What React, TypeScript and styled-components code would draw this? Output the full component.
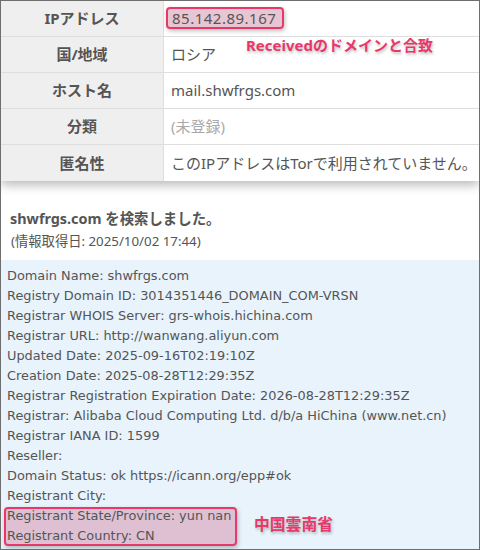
import styled, { createGlobalStyle } from 'styled-components';

const GlobalStyle = createGlobalStyle`
  body {
    margin: 0;
    background: #ffffff;
    font-family: 'Noto Sans', 'Noto Sans CJK JP', sans-serif;
  }
`;

const pink = '#e8386a';

const Frame = styled.div`
  position: relative;
  width: 480px;
  height: 550px;
  box-sizing: border-box;
  border: 1px solid #6e6e6e;
  overflow: hidden;
  background: #ffffff;
`;

const InfoTable = styled.div`
  display: grid;
  grid-template-columns: 163px 1fr;
  box-shadow: 0 4px 10px rgba(0, 0, 0, 0.28);
  position: relative;
  z-index: 1;
`;

const Label = styled.div<{ $last?: boolean }>`
  height: 36px;
  box-sizing: border-box;
  display: flex;
  align-items: center;
  justify-content: center;
  padding-bottom: 2px;
  background: #efefef;
  border-right: 1px solid #dedede;
  border-bottom: ${(p) => (p.$last ? 'none' : '1px solid #dedede')};
  font-weight: 700;
  font-size: 15px;
  color: #555555;
`;

const Value = styled.div<{ $last?: boolean; $muted?: boolean }>`
  position: relative;
  height: 36px;
  box-sizing: border-box;
  display: flex;
  align-items: center;
  padding: 0 0 2px 7px;
  background: #ffffff;
  border-bottom: ${(p) => (p.$last ? 'none' : '1px solid #dedede')};
  font-size: 15px;
  color: ${(p) => (p.$muted ? '#a9a9a9' : '#555555')};
  white-space: nowrap;
`;

const Marked = styled.span`
  display: inline-block;
  margin-left: -5px;
  padding: 0 6px 0 4px;
  line-height: 18px;
  letter-spacing: 0.5px;
  border: 2px solid ${pink};
  border-radius: 4px;
  background: rgba(214, 150, 175, 0.55);
  box-shadow: 1px 2px 4px rgba(0, 0, 0, 0.25);
`;

const Note = styled.span<{ $top: number; $left: number; $size?: number }>`
  position: absolute;
  top: ${(p) => p.$top}px;
  left: ${(p) => p.$left}px;
  color: ${pink};
  font-weight: 700;
  font-size: ${(p) => p.$size ?? 15}px;
  white-space: nowrap;
  text-shadow: 1px 2px 3px rgba(0, 0, 0, 0.25);
  z-index: 2;
`;

const Search = styled.div`
  padding: 27px 9px 8px;
  color: #555555;
`;

const SearchTitle = styled.div`
  font-size: 14.4px;
  font-weight: 700;
  line-height: 22px;
`;

const SearchDate = styled.div`
  font-size: 13.3px;
  line-height: 22px;
  padding-left: 1px;
`;

const Whois = styled.div`
  position: relative;
  background: #e8f3fc;
  padding: 6px 6px 0;
  height: 289px;
  box-sizing: border-box;
  font-family: 'DejaVu Sans', 'Noto Sans CJK JP', sans-serif;
  font-size: 12.9px;
  line-height: 20px;
  color: #555555;
`;

const Line = styled.div`
  white-space: nowrap;
`;

const MarkedBlock = styled.div`
  display: inline-block;
  box-sizing: border-box;
  height: 39px;
  margin: 1px 0 0 -3px;
  padding: 0 4px 0 1px;
  border: 2px solid ${pink};
  border-radius: 4px;
  background: rgba(214, 150, 175, 0.55);
  box-shadow: 1px 2px 4px rgba(0, 0, 0, 0.25);
`;

const MarkedLines = styled.div`
  margin-top: -3px;
`;

const rows = [
  { label: 'IPアドレス', value: '85.142.89.167', marked: true },
  { label: '国/地域', value: 'ロシア' },
  { label: 'ホスト名', value: 'mail.shwfrgs.com' },
  { label: '分類', value: '(未登録)', muted: true },
  { label: '匿名性', value: 'このIPアドレスはTorで利用されていません。' },
];

const whoisLines = [
  'Domain Name: shwfrgs.com',
  'Registry Domain ID: 3014351446_DOMAIN_COM-VRSN',
  'Registrar WHOIS Server: grs-whois.hichina.com',
  'Registrar URL: http://wanwang.aliyun.com',
  'Updated Date: 2025-09-16T02:19:10Z',
  'Creation Date: 2025-08-28T12:29:35Z',
  'Registrar Registration Expiration Date: 2026-08-28T12:29:35Z',
  'Registrar: Alibaba Cloud Computing Ltd. d/b/a HiChina (www.net.cn)',
  'Registrar IANA ID: 1599',
  'Reseller:',
  'Domain Status: ok https://icann.org/epp#ok',
  'Registrant City:',
];

const App = () => {
  return (
    <Frame>
      <GlobalStyle />
      <InfoTable>
        {rows.map((r, i) => {
          const last = i === rows.length - 1;
          return [
            <Label key={`l${i}`} $last={last}>
              {r.label}
            </Label>,
            <Value key={`v${i}`} $last={last} $muted={r.muted}>
              {r.marked ? <Marked>{r.value}</Marked> : r.value}
            </Value>,
          ];
        })}
        <Note $top={33} $left={245}>
          Receivedのドメインと合致
        </Note>
      </InfoTable>
      <Search>
        <SearchTitle>shwfrgs.com を検索しました。</SearchTitle>
        <SearchDate>(情報取得日: 2025/10/02 17:44)</SearchDate>
      </Search>
      <Whois>
        {whoisLines.map((l) => (
          <Line key={l}>{l}</Line>
        ))}
        <MarkedBlock>
          <MarkedLines>
            <Line>Registrant State/Province: yun nan</Line>
            <Line>Registrant Country: CN</Line>
          </MarkedLines>
        </MarkedBlock>
        <Note $top={255} $left={253} $size={15.8}>
          中国雲南省
        </Note>
      </Whois>
    </Frame>
  );
};

export default App;
